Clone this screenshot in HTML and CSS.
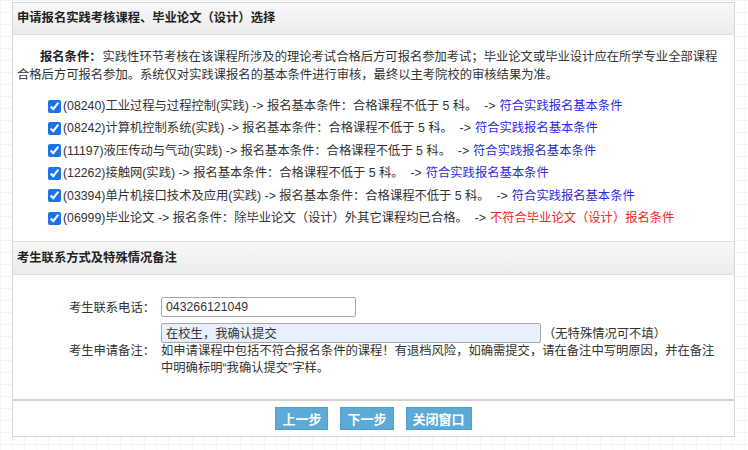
FILE: index.html
```html
<!DOCTYPE html>
<html lang="zh-CN">
<head>
<meta charset="utf-8">
<title>报名</title>
<link rel="stylesheet" href="styles.css">
</head>
<body>
<div class="panel">
  <div class="hd">申请报名实践考核课程、毕业论文（设计）选择</div>
  <div class="sec1">
    <p class="cond"><b>报名条件：</b>实践性环节考核在该课程所涉及的理论考试合格后方可报名参加考试；毕业论文或毕业设计应在所学专业全部课程合格后方可报名参加。系统仅对实践课报名的基本条件进行审核，最终以主考院校的审核结果为准。</p>
    <ul class="courses">
      <li><input type="checkbox" checked>(08240)工业过程与过程控制(实践) -&gt; 报名基本条件：合格课程不低于 5 科。&nbsp; -&gt; <span class="ok">符合实践报名基本条件</span></li>
      <li><input type="checkbox" checked>(08242)计算机控制系统(实践) -&gt; 报名基本条件：合格课程不低于 5 科。&nbsp; -&gt; <span class="ok">符合实践报名基本条件</span></li>
      <li><input type="checkbox" checked>(11197)液压传动与气动(实践) -&gt; 报名基本条件：合格课程不低于 5 科。&nbsp; -&gt; <span class="ok">符合实践报名基本条件</span></li>
      <li><input type="checkbox" checked>(12262)接触网(实践) -&gt; 报名基本条件：合格课程不低于 5 科。&nbsp; -&gt; <span class="ok">符合实践报名基本条件</span></li>
      <li><input type="checkbox" checked>(03394)单片机接口技术及应用(实践) -&gt; 报名基本条件：合格课程不低于 5 科。&nbsp; -&gt; <span class="ok">符合实践报名基本条件</span></li>
      <li><input type="checkbox" checked>(06999)毕业论文 -&gt; 报名条件：除毕业论文（设计）外其它课程均已合格。&nbsp; -&gt; <span class="bad">不符合毕业论文（设计）报名条件</span></li>
    </ul>
  </div>
  <div class="hd hd2">考生联系方式及特殊情况备注</div>
  <div class="sec2">
    <div class="form">
      <div class="lbl">考生联系电话：</div>
      <div class="fld"><input class="phone" type="text" value="043266121049"></div>
      <div class="lbl">考生申请备注：</div>
      <div class="fld">
        <div class="remark-row"><input class="remark" type="text" value="在校生，我确认提交"><span class="hint">（无特殊情况可不填）</span></div>
        <div class="notice">如申请课程中包括不符合报名条件的课程！有退档风险，如确需提交，请在备注中写明原因，并在备注中明确标明“我确认提交”字样。</div>
      </div>
    </div>
  </div>
  <div class="bar">
    <button class="btn" type="button">上一步</button>
    <button class="btn" type="button">下一步</button>
    <button class="btn" type="button">关闭窗口</button>
  </div>
</div>
</body>
</html>
```

FILE: styles.css
```css
html, body {
  margin: 0;
  padding: 0;
}
body {
  background-color: #ffffff;
  background-image:
    linear-gradient(#f4f4f4 1px, transparent 1px),
    linear-gradient(90deg, #f4f4f4 1px, transparent 1px);
  background-size: 12px 12px;
  font-family: "Liberation Sans", "Noto Sans CJK SC", sans-serif;
  font-size: 12.3px;
  color: #333333;
  text-spacing-trim: space-all;
}
.panel {
  box-sizing: border-box;
  width: 723px;
  margin: 2px 0 0 12px;
  border: 1px solid #d6d6d6;
  background: #ffffff;
}
.hd {
  height: 31px;
  line-height: 31px;
  padding-left: 4px;
  font-weight: bold;
  color: #222222;
  background: linear-gradient(#f8f8f8, #ececec);
  border-bottom: 1px solid #dedede;
}
.hd2 {
  height: 32px;
  line-height: 32px;
  border-top: 1px solid #dedede;
}
.sec1 {
  padding: 13px 10px 12px 4px;
}
.cond {
  margin: 0;
  line-height: 18px;
  text-indent: 23px;
}
.cond b {
  color: #222222;
  margin-right: 1px;
}
.courses {
  list-style: none;
  margin: 11px 0 0 31px;
  padding: 0;
}
.courses li {
  height: 22.4px;
  line-height: 22.4px;
  white-space: nowrap;
  display: flex;
  align-items: center;
}
.courses input {
  width: 13px;
  height: 13px;
  margin: 0 2px 0 0;
  accent-color: #1a73e8;
}
.ok {
  color: #2a2ae0;
  margin-left: 4px;
}
.bad {
  color: #f02424;
  margin-left: 4px;
}
.sec2 {
  padding: 22px 0 22px 0;
}
.form {
  display: grid;
  grid-template-columns: 148px 1fr;
  row-gap: 6px;
  align-items: center;
}
.lbl {
  text-align: right;
  padding-right: 6px;
  white-space: nowrap;
}
.phone, .remark {
  box-sizing: border-box;
  height: 20px;
  border: 1px solid #a9a9a9;
  border-radius: 2px;
  padding: 0 4px;
  font-family: "Liberation Sans", "Noto Sans CJK SC", sans-serif;
  font-size: 12.3px;
  color: #333333;
  margin: 0;
  outline: none;
}
.phone {
  width: 195px;
  background: #ffffff;
}
.remark-row {
  display: flex;
  align-items: center;
}
.remark {
  width: 380px;
  background: #e8f0fe;
}
.hint {
  margin-left: 2px;
}
.notice {
  line-height: 17px;
  padding-right: 14px;
}
.bar {
  border-top: 2px solid #d2d2d2;
  padding: 6px 0 6px 0;
  display: flex;
  justify-content: center;
  gap: 12px;
}
.btn {
  height: 23px;
  padding: 0 6px;
  margin: 0;
  border: 1px solid #529fcb;
  background: #5baad8;
  color: #ffffff;
  font-family: "Noto Sans CJK SC", sans-serif;
  font-weight: bold;
  font-size: 13px;
  line-height: 21px;
  cursor: pointer;
}
```
